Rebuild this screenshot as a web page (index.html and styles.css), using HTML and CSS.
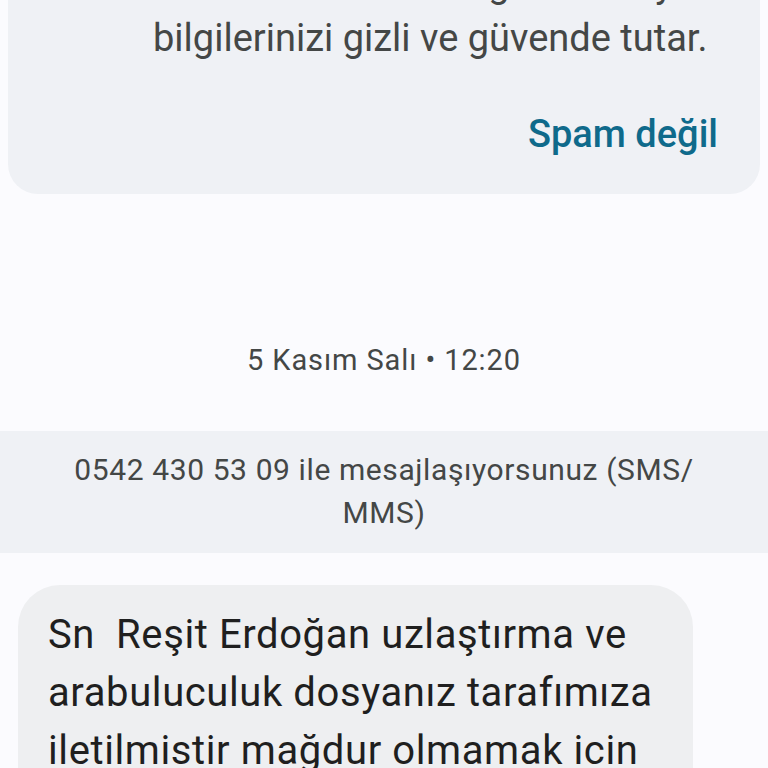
FILE: index.html
```html
<!DOCTYPE html>
<html lang="tr">
  <head>
    <meta charset="UTF-8" />
    <meta name="viewport" content="width=device-width, initial-scale=1.0" />
    <title>Mesajlar</title>
    <link rel="stylesheet" href="styles.css">
  </head>
  <body>
    <div class="spam-card">
      <p class="spam-text">
        <span class="line">Bu özellik sohbeti algılar ama yine de</span>
        <span class="line">bilgilerinizi gizli ve güvende tutar.</span>
      </p>
      <div class="spam-actions">
        <button class="spam-btn">Spam değil</button>
      </div>
    </div>

    <div class="date">5 Kasım Salı • 12:20</div>

    <div class="notice">
      0542 430 53 09 ile mesajlaşıyorsunuz (SMS/<br />MMS)
    </div>

    <div class="thread">
      <div class="bubble">Sn&nbsp; Reşit Erdoğan uzlaştırma ve arabuluculuk dosyanız tarafımıza iletilmistir mağdur olmamak icin lütfen bu numarayı arayınız</div>
    </div>
  </body>
</html>
```

FILE: styles.css
```css
body {
  margin: 0;
  background: #fbfbfe;
  font-family: Roboto, "Open Sans", sans-serif;
  color: #444746;
  overflow: hidden;
}
.spam-card {
  margin: -43px 8px 0;
  background: #eff1f5;
  border-radius: 0 0 30px 30px;
  padding: 0 42px 40px 145px;
}
.spam-text {
  margin: 0;
  font-size: 38px;
  line-height: 54px;
}
.spam-text .line {
  display: block;
  white-space: nowrap;
}
.spam-actions {
  display: flex;
  justify-content: flex-end;
  margin-top: 49px;
}
.spam-btn {
  background: none;
  border: none;
  padding: 0;
  font-family: inherit;
  font-size: 38px;
  font-weight: 500;
  line-height: 40px;
  color: #0f6a8b;
}
.date {
  margin-top: 146px;
  text-align: center;
  font-size: 29px;
  line-height: 40px;
  letter-spacing: 0.9px;
}
.notice {
  margin-top: 51px;
  background: #eff1f5;
  padding: 17px 30px 19px;
  text-align: center;
  font-size: 30px;
  line-height: 43px;
  letter-spacing: 0.6px;
}
.thread {
  padding: 32px 18px 0;
}
.bubble {
  width: 615px;
  background: #eeeff1;
  border-radius: 42px;
  padding: 21px 30px;
  font-size: 40px;
  line-height: 58px;
  letter-spacing: 0.6px;
  color: #1f1f1f;
}
```
